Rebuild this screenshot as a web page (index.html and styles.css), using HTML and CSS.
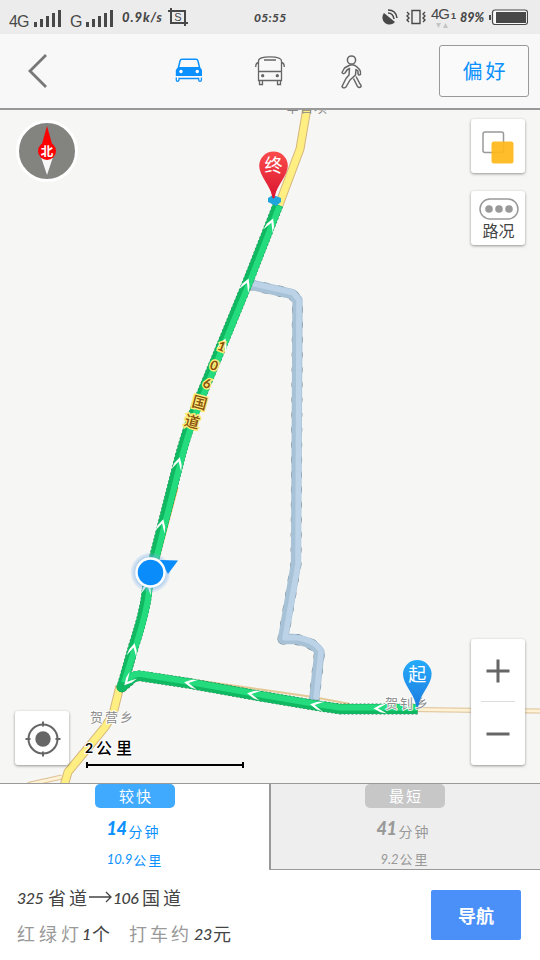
FILE: index.html
```
<!DOCTYPE html>
<html lang="zh-CN">
<head>
<meta charset="utf-8">
<title>路线规划</title>
<link rel="stylesheet" href="styles.css">
</head>
<body>
<div class="app">
  <header class="status">
    <span class="net">4G</span>
    <svg class="signal" width="28" height="17" viewBox="0 0 28 17"><path d="M0 12h3v5H0zM6 9h3v8H6zM12 6h3v11h-3zM18 3h3v14h-3zM24 0h3v17h-3z" fill="#484848"/></svg>
    <span class="net">G</span>
    <svg class="signal" width="28" height="17" viewBox="0 0 28 17"><path d="M0 12h3v5H0zM6 9h3v8H6zM12 6h3v11h-3zM18 3h3v14h-3zM24 0h3v17h-3z" fill="#484848"/></svg>
    <span class="hand speed">0.9k/s</span>
    <span class="crop"><svg width="20" height="18" viewBox="0 0 20 18" fill="none" stroke="#484848" stroke-width="2"><path d="M0 3h17v15M3 0v15h17"/></svg><b>S</b></span>
    <span class="hand clock">05:55</span>
    <svg width="17" height="16" viewBox="0 0 17 16"><path d="M2 4 13 13A6.700 6.700 0 1 1 2 4z" fill="#484848"/><path d="M6 4q5 0 6 6M6 1q8 0 9 8" fill="none" stroke="#484848" stroke-width="1.500"/></svg>
    <svg width="20" height="16" viewBox="0 0 20 16" fill="none" stroke="#484848" stroke-width="1.400"><path d="M6 1.500h8v13H6zM1 3l2 2-2 2 2 2-2 2 2 2M19 3l-2 2 2 2-2 2 2 2-2 2"/></svg>
    <span class="net4"><span>4G<small>1</small></span><svg width="12" height="5" viewBox="0 0 12 5"><path d="M0 0h5L2.500 5zM7 5h5L9.500 0z" fill="#c4c4c4"/></svg></span>
    <span class="hand percent">89%</span>
    <svg width="39" height="17" viewBox="0 0 39 17"><rect x="3.500" y="1" width="35" height="14.500" rx="2.500" fill="#fafafa" stroke="#484848" stroke-width="1.200"/><path d="M7 3h30v11H7zM0 6h2v5H0z" fill="#484848"/></svg>
  </header>

  <nav class="nav">
    <svg class="back" width="20" height="34" viewBox="0 0 20 34" fill="none" stroke="#777" stroke-width="2.800"><path d="M18 1 2 17 18 33"/></svg>
    <svg class="car" width="28" height="24" viewBox="0 0 28 24"><path d="M3.500 9.500 5 3q.5-1.800 2-1.800h14q1.500 0 2 1.800l1.500 6.500" fill="none" stroke="#0b91ff" stroke-width="1.500"/><path d="M3 9h22l2 3v6H.8v-6z" fill="#0b91ff"/><path d="M1.300 19.500V22q0 1.300 1.200 1.300T4 22v-1.500h19.700V22q0 1.300 1.300 1.300t1.400-1.300v-2.500" fill="none" stroke="#0b91ff" stroke-width="1.300"/><circle cx="6" cy="13.500" r="1.700" fill="#fff"/><circle cx="22.300" cy="13.500" r="1.700" fill="#fff"/></svg>
    <svg width="30" height="30" viewBox="0 0 30 30" fill="none" stroke="#666" stroke-width="1.300"><path d="M3.500 24.500V5Q3.500.8 15 .8T26.500 5v19.500zM9 4h12M3.500 15.500h23M3.500 6.500Q.7 7 .7 11M26.500 6.500q2.800.5 2.800 4.500M4.500 25v3.500h3V25M22.500 25v3.500h3V25"/><circle cx="7.700" cy="19.700" r="1" fill="#666"/><circle cx="22.300" cy="19.700" r="1" fill="#666"/></svg>
    <svg class="walk" width="21" height="34" viewBox="0 0 21 34" fill="none" stroke="#666" stroke-width="1.500" stroke-linejoin="round"><circle cx="10.500" cy="5" r="4.100"/><path d="M8 10.500Q12 8.500 15.500 11.500L18.500 14.500Q20 16 19.500 19.500 17.500 21 17 18.500V16L15 14.500 14.500 20 9 25 5 32Q2.500 34 1 31.500L5 23.500 8 20 8.500 13.500 6 15 4 18Q2 19.500 1 17.500L3.500 13z"/><path d="M12.500 23.500 16.500 31.500Q18.500 33.500 20 31.500 20.500 30.500 19 29L15 21.500"/></svg>
    <button class="prefer">偏好</button>
  </nav>

  <main class="map">
    <svg class="canvas" width="540" height="673" viewBox="0 110 540 673">
      <defs>
        <linearGradient id="red" x1="0" y1="0" x2="0" y2="1"><stop offset="0" stop-color="#fb4b4c"/><stop offset="1" stop-color="#d9152f"/></linearGradient>
        <linearGradient id="blue" x1="0" y1="0" x2="0" y2="1"><stop offset="0" stop-color="#26aafa"/><stop offset="1" stop-color="#1c7de0"/></linearGradient>
        <radialGradient id="halo"><stop offset=".7" stop-color="#78aeea" stop-opacity=".65"/><stop offset="1" stop-color="#78aeea" stop-opacity=".08"/></radialGradient>
        <path id="arrow" d="M-5 6.500-3.800 0 0-7 3.800 0 5 6.500 3 3 0-2.500-3 3z" fill="#fff"/>
        <path id="pin" d="M0 47Q-1.200 47-1.700 43.500C-3 35-14.300 24-14.300 14.300A14.300 14.300 0 0 1 14.300 14.300C14.300 24 3 35 1.700 43.500Q1.200 47 0 47z"/>
      </defs>
      <g fill="none" stroke-linejoin="round">
        <path d="M62 777 28 784.500M410 709.500 540 711" stroke="#dcc198" stroke-width="5"/>
        <path d="M62 777 28 784.500M410 709.500 540 711" stroke="#fff2d4" stroke-width="3"/>
        <path d="M307 108 300 149 279 205M120 686 113 714 105 727 68 772 64 786" stroke="#d5b57c" stroke-width="9"/>
        <path d="M307 108 300 149 279 205M120 686 113 714 105 727 68 772 64 786" stroke="#ffef83" stroke-width="7"/>
        <path d="M145 673 313 697 350 704" stroke="#e2c995" stroke-width="2"/>
        <path d="M156 562 176 487" stroke="#e0a744" stroke-width="5"/>
      </g>
      <text x="286" y="112" font-size="13" letter-spacing="1" fill="#888">辛营坝</text>
      <g fill="none" stroke-linejoin="round">
        <g stroke-linecap="round">
          <path d="M250 284.500 292 294 297.500 300 296 564 283 639 294 639Q314 642 319.500 652L314 700" stroke="#6b7b86" stroke-width="11" stroke-dasharray="2 13"/>
          <path d="M250 284.500 292 294 297.500 300 296 564 283 639 294 639Q314 642 319.500 652L314 700" stroke="#a7c2d6" stroke-width="10.300"/>
        </g>
        <path d="M252 283.500 293 292.500 299 300 298 564 285 638 296 637.500Q315 640 321 651L316 699" stroke="#bbd2e7" stroke-width="5.500"/>
        <path d="M417.500 709H340L313 705 254 695 190 683.500 141 676Q134 675 129 681L122 687 134 645Q146 608 147 590L151 571 180 457Q190 420 203 391L247 284 278 205" stroke="#327b53" stroke-width="10.800" stroke-dasharray="2 2"/>
        <path d="M417.500 709H340L313 705 254 695 190 683.500 141 676Q134 675 129 681L122 687 134 645Q146 608 147 590L151 571 180 457Q190 420 203 391L247 284 278 205" stroke="#10b862" stroke-width="10.200"/>
        <path d="M417.500 707.500H340L313 703.500 254 693.500 190 682 141 674Q133 673 128 680" stroke="#24dc7e" stroke-width="6"/>
        <path d="M124 683 136 645Q148 608 149 590L153 571 182 457Q192 420 205 391L249 284 279.500 206" stroke="#24dc7e" stroke-width="6"/>
      </g>
      <circle cx="121.500" cy="687" r="5" fill="#10b862"/>
      <path d="M268 198 273 195 281 198 281 202 276 206 268 202z" fill="#20a4de"/>
      <use href="#arrow" transform="translate(270.500 225) rotate(22)"/>
      <use href="#arrow" transform="translate(246 285) rotate(22)"/>
      <use href="#arrow" transform="translate(223 345) rotate(20)"/>
      <use href="#arrow" transform="translate(178 464) rotate(15)"/>
      <use href="#arrow" transform="translate(161.500 526) rotate(15)"/>
      <use href="#arrow" transform="translate(147 588) rotate(10)"/>
      <use href="#arrow" transform="translate(133 650) rotate(13)"/>
      <use href="#arrow" transform="translate(129 680) rotate(222)"/>
      <use href="#arrow" transform="translate(191 683.500) rotate(-80)"/>
      <use href="#arrow" transform="translate(254 694.500) rotate(-80)"/>
      <use href="#arrow" transform="translate(317 705.500) rotate(-80)"/>
      <use href="#arrow" transform="translate(380.500 708.500) rotate(-90)"/>
      <g class="road">
        <text transform="translate(221.500 347) rotate(22)" y="4">1</text>
        <text transform="translate(214 366) rotate(20)" y="4">0</text>
        <text transform="translate(207 384) rotate(20)" y="4">6</text>
        <text transform="translate(199.500 403) rotate(15)" y="5" class="big">国</text>
        <text transform="translate(192 422) rotate(15)" y="5" class="big">道</text>
      </g>
      <circle cx="150.500" cy="572.500" r="20" fill="url(#halo)"/>
      <path d="M160 560 178 560.500 168 574z" fill="#0b8cfb"/>
      <circle cx="150.500" cy="572.500" r="14" fill="#0b8cfb" stroke="#fff" stroke-width="2.500"/>
      <g class="place">
        <text x="90" y="722" textLength="43">贺营乡</text>
        <text x="385" y="708" textLength="43">贺钊乡</text>
      </g>
      <use href="#pin" x="273.500" y="151.500" fill="url(#red)"/>
      <use href="#pin" x="417.300" y="660" fill="url(#blue)"/>
      <g class="pinlabel"><text x="273.500" y="172">终</text><text x="417.300" y="680.500">起</text></g>
      <g class="scale"><text x="85" y="753" class="num">2</text><text x="96" y="754" textLength="36">公里</text></g>
      <path d="M87 765H243M87 762v6M243 762v6" stroke="#000" stroke-width="2"/>
    </svg>
    <svg class="compass" width="62" height="62" viewBox="0 0 62 62"><circle cx="31" cy="31" r="29.500" fill="#838380" stroke="#fff" stroke-width="3"/><path d="M31 6 38 31H24z" fill="red"/><path d="M25 37h12L31 55z" fill="#f7f7f7"/><circle cx="31" cy="31" r="9" fill="red"/><text x="31" y="35.500" text-anchor="middle" font-size="12.500" font-weight="700" fill="#fff">北</text></svg>
    <div class="tools">
      <button class="tile"><svg width="32" height="33" viewBox="0 0 32 33"><rect x="1" y="1" width="20.500" height="20.500" rx="2" fill="none" stroke="#999" stroke-width="1.500"/><rect x="9.500" y="10.500" width="22" height="22" rx="2.500" fill="#ffb81c" fill-opacity=".93"/></svg></button>
      <button class="tile traffic"><svg width="40" height="22" viewBox="0 0 40 22"><rect x="1" y="1" width="38" height="20" rx="10" fill="none" stroke="#999" stroke-width="1.500"/><g fill="#999"><circle cx="10" cy="11" r="3.800"/><circle cx="20" cy="11" r="3.800"/><circle cx="30" cy="11" r="3.800"/></g></svg><span>路况</span></button>
    </div>
    <div class="zoom">
      <svg width="24" height="62" viewBox="0 0 24 62"><path d="M.5 32h23M12 20.500v23" stroke="#666" stroke-width="3"/></svg>
      <i></i>
      <svg width="24" height="62" viewBox="0 0 24 62"><path d="M.5 32h23" stroke="#666" stroke-width="3"/></svg>
    </div>
    <button class="tile locate"><svg width="36" height="36" viewBox="0 0 36 36"><circle cx="18" cy="18" r="14.500" fill="none" stroke="#666" stroke-width="2"/><circle cx="18" cy="18" r="7.700" fill="#666"/><path d="M18 .5v5M18 30.500v5M.5 18h5M30.500 18h5" stroke="#666" stroke-width="2"/></svg></button>
  </main>

  <section class="tabs">
    <div class="tab on"><span class="badge">较快</span><p class="time"><b>14</b><span>分钟</span></p><p class="dist"><em>10.9</em><span>公里</span></p></div>
    <div class="tab off"><span class="badge">最短</span><p class="time"><b>41</b><span>分钟</span></p><p class="dist"><em>9.2</em><span>公里</span></p></div>
  </section>

  <footer class="info">
    <div class="detail">
      <p class="via"><em>325</em><span class="cjk">省道</span><svg width="24" height="12" viewBox="0 0 24 12" fill="none" stroke="#444" stroke-width="1.300"><path d="M0 6h22M17 1l5 5-5 5"/></svg><em>106</em><span class="cjk">国道</span></p>
      <p class="facts"><span class="grey">红绿灯</span><em>1</em><span class="unit">个</span><span class="grey taxi">打车约</span><em class="fare">23</em><span class="yuan">元</span></p>
    </div>
    <button class="go">导航</button>
  </footer>
</div>
</body>
</html>
```
FILE: styles.css
```
* { box-sizing: border-box; }
body, p { margin: 0; }
body { font-family: "Liberation Sans", "Noto Sans CJK SC", sans-serif; color: #444; }
button { border: 0; padding: 0; font-family: inherit; }
svg { display: block; flex: none; }
em, b, .hand { font-family: Lato, "Noto Sans", sans-serif; font-style: italic; }
.app { width: 540px; height: 960px; display: flex; flex-direction: column; background: #fff; overflow: hidden; }

.status { height: 34px; flex: none; background: #ececec; padding-left: 9px; display: grid; align-items: center; white-space: nowrap;
  grid-template-columns: 25px 36px 16px 36px 46px 86px 128px 24px 25px 29px 29px 40px; color: #484848; }
.net { font-size: 16px; letter-spacing: -1px; line-height: 18px; padding-top: 9px; }
.signal { margin-top: 3px; }
.hand { font-size: 13px; font-weight: 900; letter-spacing: .3px; }
.speed { letter-spacing: .9px; }
.clock { font-size: 12px; }
.percent { font-size: 12.500px; letter-spacing: 0; }
.crop { display: grid; width: 20px; place-items: center; }
.crop > * { grid-area: 1 / 1; }
.crop b { font: 11px "Liberation Sans", sans-serif; }
.net4 { font-size: 15px; letter-spacing: -1px; line-height: 15px; }
.net4 small { font-size: 9px; margin-left: 2px; font-weight: bold; }
.net4 svg { margin-left: 5px; margin-top: -1px; }

.nav { height: 76px; flex: none; background: #f8f8f8; border-bottom: 2px solid #999; display: grid; align-items: center; padding-left: 28px;
  grid-template-columns: 147px 80px 86px 98px 90px; }
.car { margin-top: -2px; }
.walk { margin-top: 1px; }
.prefer { width: 90px; height: 52px; margin-top: -1px; border: 1px solid #999; border-radius: 3px; background: #fafafa; color: #0b91ff; font-size: 20px; letter-spacing: 3px; padding-left: 3px; }

.map { height: 673px; flex: none; position: relative; overflow: hidden; background: #f6f6f4; }
.road text { font-family: Lato, "Noto Sans CJK SC", sans-serif; font-size: 13px; font-weight: 700; fill: #87500a; stroke: #ffeb7a; stroke-width: 3px; paint-order: stroke; text-anchor: middle; }
.road .big { font-size: 15px; font-weight: 500; }
.place text { font-size: 13px; fill: #8c8c8c; stroke: #fff; stroke-width: 1.500px; paint-order: stroke; }
.pinlabel text { font-size: 18px; fill: #fff; text-anchor: middle; }
.scale text { font-size: 16px; font-weight: 500; fill: #000; stroke: #fff; stroke-width: 2px; paint-order: stroke; }
.scale .num { font-family: Lato, sans-serif; font-weight: 700; font-size: 14px; }
.compass { position: absolute; left: 16px; top: 10px; }
.tile { display: flex; flex-direction: column; align-items: center; justify-content: center; width: 54px; height: 54px; background: #fff; border-radius: 3px; box-shadow: 0 1px 3px rgba(0,0,0,.4); }
.tools { position: absolute; left: 471px; top: 9px; display: flex; flex-direction: column; gap: 18px; }
.tools .tile:first-child { padding: 2px 0 0; }
.tools .traffic { padding: 2px 0 0 1px; }
.traffic span { font-size: 16px; line-height: 18px; color: #444; margin-top: 3px; }
.zoom { position: absolute; left: 471px; top: 529px; width: 54px; height: 126px; background: #fff; border-radius: 3px; box-shadow: 0 1px 3px rgba(0,0,0,.4); display: flex; flex-direction: column; align-items: center; }
.zoom i { width: 34px; height: 1px; background: #ddd; }
.locate { position: absolute; left: 15px; top: 601px; padding: 1px 0 0 1px; }

.tabs { height: 87px; flex: none; display: grid; grid-template-columns: 269px 271px; border-top: 1px solid #999; }
.tab { display: flex; flex-direction: column; align-items: center; height: 86px; white-space: nowrap; }
.on { color: #0b91ff; padding-left: 1px; }
.off { color: #999; background: #eee; border-left: 2px solid #999; border-bottom: 1px solid #999; padding-right: 1px; }
.badge { width: 80px; height: 24px; border-radius: 5px; background: #40aaff; color: #fff; font-size: 15px; line-height: 25px; text-align: center; letter-spacing: 2px; padding-left: 2px; }
.off .badge { background: #c7c7c7; }
.time { height: 30px; margin-top: 8px; display: flex; align-items: center; font-size: 14px; letter-spacing: 2px; }
.time b { font-size: 18px; font-weight: 900; letter-spacing: -.5px; margin: -4px 2px 0 -3px; width: 20px; }
.time span { margin-top: 1px; }
.dist { height: 22px; margin-top: 4px; display: flex; align-items: center; font-size: 13px; }
.dist em { font-size: 13px; margin-right: 1px; }
.dist span { letter-spacing: 2px; }

.info { flex: 1; display: flex; }
.detail { width: 431px; padding: 14px 0 0 17px; white-space: nowrap; }
.detail p { display: flex; align-items: center; }
.via { height: 26px; }
.via em { font-size: 16px; width: 29px; font-weight: 500; letter-spacing: -.7px; }
.via em:first-child { width: 31px; letter-spacing: -.5px; }
.cjk { font-size: 18px; letter-spacing: 3px; width: 41px; }
.facts { height: 26px; margin-top: 10px; font-size: 18px; }
.grey { color: #999; letter-spacing: 4px; width: 65px; }
.facts em { width: 10px; font-size: 16px; font-weight: 500; }
.unit { width: 37px; }
.grey.taxi { letter-spacing: 3px; }
.facts .fare { width: 19px; letter-spacing: -.3px; }
.go { width: 90px; height: 50px; margin-top: 20px; border-radius: 2px; background: #4a90f8; color: #fff; font-size: 18px; font-weight: 700; }
```
